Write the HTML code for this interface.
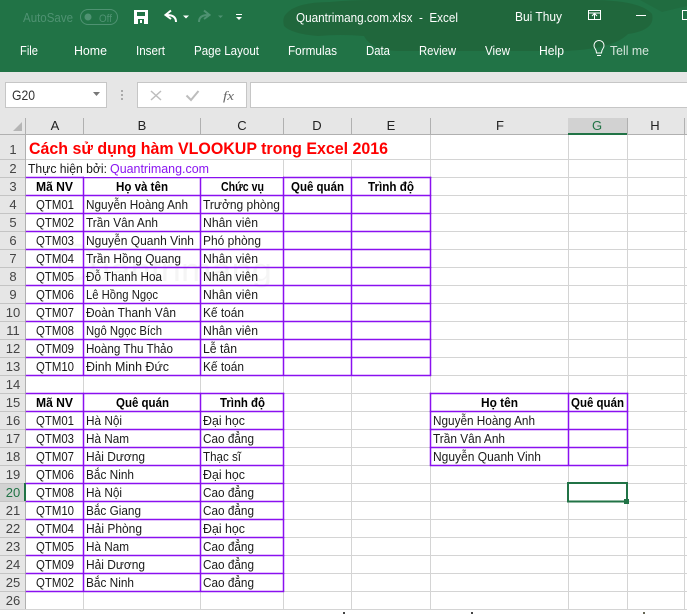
<!DOCTYPE html>
<html><head><meta charset="utf-8"><title>Quantrimang.com.xlsx - Excel</title>
<style>
html,body{margin:0;padding:0;background:#fff;width:687px;height:614px;overflow:hidden}
svg{display:block;position:absolute;left:0;top:0}
text{font-family:"Liberation Sans",sans-serif;font-size:13px;fill:#1a1a1a}
.b{font-weight:bold;fill:#000;font-size:12.5px}
.h{fill:#222;font-size:13px;text-anchor:middle}
.r{fill:#444;font-size:13px;text-anchor:middle}
.w{fill:#fff;font-size:13px}
</style></head><body>
<svg width="687" height="614" viewBox="0 0 687 614" xmlns="http://www.w3.org/2000/svg">
<!-- ribbon -->
<rect x="0" y="0" width="687" height="72" fill="#217346"/>
<path d="M286 14Q296 2 330 2Q350 0 372 0H590Q640 0 652 14Q656 30 628 34Q612 50 560 51H400Q372 51 364 36Q340 34 318 36Q292 34 284 26Q282 18 286 14Z" fill="#20673c"/>
<path d="M640 0H687V6L662 12Z" fill="#206c40"/>
<text x="23" y="22" style="fill:#4f9272" textLength="50" lengthAdjust="spacingAndGlyphs">AutoSave</text>
<rect x="80.500" y="9.500" width="37" height="15" rx="7.500" fill="none" stroke="#4f9272"/>
<circle cx="88" cy="17" r="3.500" fill="#4f9272"/>
<text x="99" y="22" style="fill:#4f9272;font-size:11px" textLength="13" lengthAdjust="spacingAndGlyphs">Off</text>
<path d="M134 10H148V24H134Z" fill="#fff"/><rect x="137" y="12" width="8" height="4" fill="#217346"/><rect x="138" y="19" width="6" height="5" fill="#217346"/><rect x="140" y="20" width="2" height="3" fill="#fff"/>
<path d="M176 22Q176 15 167 15M171 10.500L165.500 15 171 19" fill="none" stroke="#fff" stroke-width="2"/>
<path d="M183 15.500H189L186 18.500Z" fill="#fff"/>
<path d="M199 22Q199 15 208 15M204 10.500L209.500 15 204 19" fill="none" stroke="#4f9272" stroke-width="2"/>
<path d="M218 15.500H223L220.500 18Z" fill="#4f9272"/>
<rect x="236" y="14" width="6" height="1" fill="#fff"/><path d="M236 17H242L239 20Z" fill="#fff"/>
<text x="296" y="22" class="w" textLength="162" lengthAdjust="spacingAndGlyphs" xml:space="preserve">Quantrimang.com.xlsx  -  Excel</text>
<text x="515" y="21" class="w" textLength="47" lengthAdjust="spacingAndGlyphs">Bui Thuy</text>
<rect x="588.500" y="10.500" width="12" height="9" fill="none" stroke="#fff"/><path d="M588 13H601M594.500 19V14M592 16L594.500 13.500 597 16" fill="none" stroke="#fff"/>
<rect x="636" y="15" width="10" height="1" fill="#fff"/>
<rect x="682.500" y="10.500" width="9" height="9" fill="none" stroke="#fff"/>
<text x="20" y="55" class="w" textLength="18" lengthAdjust="spacingAndGlyphs">File</text>
<text x="74" y="55" class="w" textLength="33" lengthAdjust="spacingAndGlyphs">Home</text>
<text x="136" y="55" class="w" textLength="29" lengthAdjust="spacingAndGlyphs">Insert</text>
<text x="194" y="55" class="w" textLength="65" lengthAdjust="spacingAndGlyphs">Page Layout</text>
<text x="288" y="55" class="w" textLength="49" lengthAdjust="spacingAndGlyphs">Formulas</text>
<text x="366" y="55" class="w" textLength="24" lengthAdjust="spacingAndGlyphs">Data</text>
<text x="419" y="55" class="w" textLength="37" lengthAdjust="spacingAndGlyphs">Review</text>
<text x="485" y="55" class="w" textLength="25" lengthAdjust="spacingAndGlyphs">View</text>
<text x="539" y="55" class="w" textLength="25" lengthAdjust="spacingAndGlyphs">Help</text>
<path d="M596.500 53Q596.500 50.500 595 48.500A5 5 0 1 1 603 48.500Q601.500 50.500 601.500 53ZM597 55.500H601" fill="none" stroke="#fff"/>
<text x="610" y="55" class="w" textLength="39" lengthAdjust="spacingAndGlyphs" style="fill:#d5e5dc">Tell me</text>
<!-- formula bar -->
<rect x="0" y="72" width="687" height="46" fill="#e6e6e6"/>
<rect x="5.500" y="82.500" width="101" height="25" fill="#fff" stroke="#c6c6c6"/>
<text x="12" y="100" style="font-size:14px;fill:#333" textLength="23" lengthAdjust="spacingAndGlyphs">G20</text>
<path d="M93 92H100L96.500 96Z" fill="#777"/>
<rect x="121" y="90" width="2" height="2" fill="#aaa"/><rect x="121" y="94" width="2" height="2" fill="#aaa"/><rect x="121" y="98" width="2" height="2" fill="#aaa"/>
<rect x="137.500" y="82.500" width="109" height="25" fill="#fff" stroke="#c6c6c6"/>
<path d="M151 91L161 100M161 91L151 100" stroke="#bdbdbd" stroke-width="1.500" fill="none"/>
<path d="M186.500 95.500L191 100 198.500 91" stroke="#bdbdbd" stroke-width="2" fill="none"/>
<text x="223" y="100" style="font-family:'Liberation Serif',serif;font-style:italic;font-size:13px;fill:#666" textLength="11" lengthAdjust="spacingAndGlyphs">fx</text>
<rect x="250.500" y="82.500" width="440" height="25" fill="#fff" stroke="#c6c6c6"/>
<!-- headers -->
<rect x="0" y="118" width="687" height="16" fill="#e6e6e6"/>
<rect x="0" y="134" width="25" height="475" fill="#e6e6e6"/>
<path d="M13 131H22V122Z" fill="#b5b5b5"/>
<rect x="568" y="118" width="59" height="16" fill="#d2d2d2"/>
<rect x="0" y="483" width="25" height="18" fill="#d2d2d2"/>
<g fill="#b0b0b0">
<rect x="25" y="118" width="1" height="16"/><rect x="83" y="118" width="1" height="16"/><rect x="200" y="118" width="1" height="16"/><rect x="283" y="118" width="1" height="16"/><rect x="351" y="118" width="1" height="16"/><rect x="430" y="118" width="1" height="16"/><rect x="627" y="118" width="1" height="16"/><rect x="684" y="118" width="1" height="16"/>
<rect x="0" y="134" width="687" height="1"/><rect x="25" y="134" width="1" height="475"/>
</g>
<g fill="#c4c4c4">
<rect x="0" y="159" width="25" height="1"/><rect x="0" y="177" width="25" height="1"/><rect x="0" y="195" width="25" height="1"/><rect x="0" y="213" width="25" height="1"/><rect x="0" y="231" width="25" height="1"/><rect x="0" y="249" width="25" height="1"/><rect x="0" y="267" width="25" height="1"/><rect x="0" y="285" width="25" height="1"/><rect x="0" y="303" width="25" height="1"/><rect x="0" y="321" width="25" height="1"/><rect x="0" y="339" width="25" height="1"/><rect x="0" y="357" width="25" height="1"/><rect x="0" y="375" width="25" height="1"/><rect x="0" y="393" width="25" height="1"/><rect x="0" y="411" width="25" height="1"/><rect x="0" y="429" width="25" height="1"/><rect x="0" y="447" width="25" height="1"/><rect x="0" y="465" width="25" height="1"/><rect x="0" y="483" width="25" height="1"/><rect x="0" y="501" width="25" height="1"/><rect x="0" y="519" width="25" height="1"/><rect x="0" y="537" width="25" height="1"/><rect x="0" y="555" width="25" height="1"/><rect x="0" y="573" width="25" height="1"/><rect x="0" y="591" width="25" height="1"/><rect x="0" y="609" width="25" height="1"/>
</g>
<rect x="568" y="133" width="59" height="2" fill="#217346"/>
<rect x="24" y="483" width="2" height="18" fill="#217346"/>
<text x="55" y="130" class="h">A</text><text x="142" y="130" class="h">B</text><text x="242" y="130" class="h">C</text><text x="317" y="130" class="h">D</text><text x="391" y="130" class="h">E</text><text x="500" y="130" class="h">F</text><text x="597" y="130" class="h" style="fill:#217346">G</text><text x="655" y="130" class="h">H</text>
<text x="13" y="154" class="r">1</text><text x="13" y="173" class="r">2</text><text x="13" y="191" class="r">3</text><text x="13" y="209" class="r">4</text><text x="13" y="227" class="r">5</text><text x="13" y="245" class="r">6</text><text x="13" y="263" class="r">7</text><text x="13" y="281" class="r">8</text><text x="13" y="299" class="r">9</text><text x="13" y="317" class="r">10</text><text x="13" y="335" class="r">11</text><text x="13" y="353" class="r">12</text><text x="13" y="371" class="r">13</text><text x="13" y="389" class="r">14</text><text x="13" y="407" class="r">15</text><text x="13" y="425" class="r">16</text><text x="13" y="443" class="r">17</text><text x="13" y="461" class="r">18</text><text x="13" y="479" class="r">19</text><text x="13" y="497" class="r" style="fill:#217346">20</text><text x="13" y="515" class="r">21</text><text x="13" y="533" class="r">22</text><text x="13" y="551" class="r">23</text><text x="13" y="569" class="r">24</text><text x="13" y="587" class="r">25</text><text x="13" y="605" class="r">26</text>
<!-- gridlines -->
<g fill="#d4d4d4">
<rect x="26" y="159" width="661" height="1"/><rect x="26" y="177" width="661" height="1"/><rect x="26" y="195" width="661" height="1"/><rect x="26" y="213" width="661" height="1"/><rect x="26" y="231" width="661" height="1"/><rect x="26" y="249" width="661" height="1"/><rect x="26" y="267" width="661" height="1"/><rect x="26" y="285" width="661" height="1"/><rect x="26" y="303" width="661" height="1"/><rect x="26" y="321" width="661" height="1"/><rect x="26" y="339" width="661" height="1"/><rect x="26" y="357" width="661" height="1"/><rect x="26" y="375" width="661" height="1"/><rect x="26" y="393" width="661" height="1"/><rect x="26" y="411" width="661" height="1"/><rect x="26" y="429" width="661" height="1"/><rect x="26" y="447" width="661" height="1"/><rect x="26" y="465" width="661" height="1"/><rect x="26" y="483" width="661" height="1"/><rect x="26" y="501" width="661" height="1"/><rect x="26" y="519" width="661" height="1"/><rect x="26" y="537" width="661" height="1"/><rect x="26" y="555" width="661" height="1"/><rect x="26" y="573" width="661" height="1"/><rect x="26" y="591" width="661" height="1"/><rect x="0" y="609" width="687" height="1"/>
<rect x="83" y="177" width="1" height="432"/><rect x="200" y="177" width="1" height="432"/><rect x="283" y="160" width="1" height="449"/><rect x="351" y="177" width="1" height="432"/><rect x="430" y="135" width="1" height="474"/><rect x="568" y="135" width="1" height="474"/><rect x="627" y="135" width="1" height="474"/><rect x="684" y="135" width="1" height="474"/>
<rect x="351" y="160" width="1" height="17"/>
</g>
<!-- watermark -->
<text x="90" y="281" style="font-size:32px;fill:#000;opacity:.035" textLength="182" lengthAdjust="spacingAndGlyphs">uantrimang</text>
<circle cx="76" cy="262" r="17" fill="none" stroke="#000" stroke-width="3" opacity=".03"/>
<!-- purple borders -->
<g fill="#8a10f0" stroke="#8a10f0" stroke-width=".5">
<rect x="26" y="177" width="405" height="1"/><rect x="26" y="195" width="405" height="1"/><rect x="26" y="213" width="405" height="1"/><rect x="26" y="231" width="405" height="1"/><rect x="26" y="249" width="405" height="1"/><rect x="26" y="267" width="405" height="1"/><rect x="26" y="285" width="405" height="1"/><rect x="26" y="303" width="405" height="1"/><rect x="26" y="321" width="405" height="1"/><rect x="26" y="339" width="405" height="1"/><rect x="26" y="357" width="405" height="1"/><rect x="26" y="375" width="405" height="1"/>
<rect x="83" y="177" width="1" height="198"/><rect x="200" y="177" width="1" height="198"/><rect x="283" y="177" width="1" height="198"/><rect x="351" y="177" width="1" height="198"/><rect x="430" y="177" width="1" height="198"/>
<rect x="26" y="393" width="258" height="1"/><rect x="26" y="411" width="258" height="1"/><rect x="26" y="429" width="258" height="1"/><rect x="26" y="447" width="258" height="1"/><rect x="26" y="465" width="258" height="1"/><rect x="26" y="483" width="258" height="1"/><rect x="26" y="501" width="258" height="1"/><rect x="26" y="519" width="258" height="1"/><rect x="26" y="537" width="258" height="1"/><rect x="26" y="555" width="258" height="1"/><rect x="26" y="573" width="258" height="1"/><rect x="26" y="591" width="258" height="1"/>
<rect x="83" y="393" width="1" height="198"/><rect x="200" y="393" width="1" height="198"/><rect x="283" y="393" width="1" height="198"/>
<rect x="430" y="393" width="198" height="1"/><rect x="430" y="411" width="198" height="1"/><rect x="430" y="429" width="198" height="1"/><rect x="430" y="447" width="198" height="1"/><rect x="430" y="465" width="198" height="1"/>
<rect x="430" y="393" width="1" height="72"/><rect x="568" y="393" width="1" height="72"/><rect x="627" y="393" width="1" height="72"/>
</g>
<!-- title rows -->
<rect x="26" y="135" width="404" height="24" fill="#fff"/>
<rect x="84" y="160" width="199" height="17" fill="#fff"/>
<text x="29" y="154" style="font-size:17px;font-weight:bold;fill:#f00" textLength="359" lengthAdjust="spacingAndGlyphs">Cách sử dụng hàm VLOOKUP trong Excel 2016</text>
<text x="28" y="173" textLength="79" lengthAdjust="spacingAndGlyphs">Thực hiện bởi:</text>
<text x="110" y="173" style="fill:#8a14f0" textLength="99" lengthAdjust="spacingAndGlyphs">Quantrimang.com</text>
<!-- table 1 -->
<text x="36" y="191" class="b" textLength="37" lengthAdjust="spacingAndGlyphs">Mã NV</text>
<text x="116" y="191" class="b" textLength="52" lengthAdjust="spacingAndGlyphs">Họ và tên</text>
<text x="221" y="191" class="b" textLength="43" lengthAdjust="spacingAndGlyphs">Chức vụ</text>
<text x="291" y="191" class="b" textLength="53" lengthAdjust="spacingAndGlyphs">Quê quán</text>
<text x="368" y="191" class="b" textLength="46" lengthAdjust="spacingAndGlyphs">Trình độ</text>
<text x="36" y="209" textLength="38" lengthAdjust="spacingAndGlyphs">QTM01</text><text x="86" y="209" textLength="102" lengthAdjust="spacingAndGlyphs">Nguyễn Hoàng Anh</text><text x="203" y="209" textLength="77" lengthAdjust="spacingAndGlyphs">Trưởng phòng</text>
<text x="36" y="227" textLength="38" lengthAdjust="spacingAndGlyphs">QTM02</text><text x="86" y="227" textLength="72" lengthAdjust="spacingAndGlyphs">Trần Vân Anh</text><text x="203" y="227" textLength="55" lengthAdjust="spacingAndGlyphs">Nhân viên</text>
<text x="36" y="245" textLength="38" lengthAdjust="spacingAndGlyphs">QTM03</text><text x="86" y="245" textLength="108" lengthAdjust="spacingAndGlyphs">Nguyễn Quanh Vinh</text><text x="203" y="245" textLength="58" lengthAdjust="spacingAndGlyphs">Phó phòng</text>
<text x="36" y="263" textLength="38" lengthAdjust="spacingAndGlyphs">QTM04</text><text x="86" y="263" textLength="95" lengthAdjust="spacingAndGlyphs">Trần Hồng Quang</text><text x="203" y="263" textLength="55" lengthAdjust="spacingAndGlyphs">Nhân viên</text>
<text x="36" y="281" textLength="38" lengthAdjust="spacingAndGlyphs">QTM05</text><text x="86" y="281" textLength="76" lengthAdjust="spacingAndGlyphs">Đỗ Thanh Hoa</text><text x="203" y="281" textLength="55" lengthAdjust="spacingAndGlyphs">Nhân viên</text>
<text x="36" y="299" textLength="38" lengthAdjust="spacingAndGlyphs">QTM06</text><text x="86" y="299" textLength="72" lengthAdjust="spacingAndGlyphs">Lê Hồng Ngọc</text><text x="203" y="299" textLength="55" lengthAdjust="spacingAndGlyphs">Nhân viên</text>
<text x="36" y="317" textLength="38" lengthAdjust="spacingAndGlyphs">QTM07</text><text x="86" y="317" textLength="90" lengthAdjust="spacingAndGlyphs">Đoàn Thanh Vân</text><text x="203" y="317" textLength="41" lengthAdjust="spacingAndGlyphs">Kế toán</text>
<text x="36" y="335" textLength="38" lengthAdjust="spacingAndGlyphs">QTM08</text><text x="86" y="335" textLength="76" lengthAdjust="spacingAndGlyphs">Ngô Ngọc Bích</text><text x="203" y="335" textLength="55" lengthAdjust="spacingAndGlyphs">Nhân viên</text>
<text x="36" y="353" textLength="38" lengthAdjust="spacingAndGlyphs">QTM09</text><text x="86" y="353" textLength="87" lengthAdjust="spacingAndGlyphs">Hoàng Thu Thảo</text><text x="203" y="353" textLength="34" lengthAdjust="spacingAndGlyphs">Lễ tân</text>
<text x="36" y="371" textLength="38" lengthAdjust="spacingAndGlyphs">QTM10</text><text x="86" y="371" textLength="83" lengthAdjust="spacingAndGlyphs">Đinh Minh Đức</text><text x="203" y="371" textLength="41" lengthAdjust="spacingAndGlyphs">Kế toán</text>
<!-- table 2 -->
<text x="36" y="407" class="b" textLength="37" lengthAdjust="spacingAndGlyphs">Mã NV</text>
<text x="116" y="407" class="b" textLength="53" lengthAdjust="spacingAndGlyphs">Quê quán</text>
<text x="220" y="407" class="b" textLength="45" lengthAdjust="spacingAndGlyphs">Trình độ</text>
<text x="36" y="425" textLength="38" lengthAdjust="spacingAndGlyphs">QTM01</text><text x="86" y="425" textLength="36" lengthAdjust="spacingAndGlyphs">Hà Nội</text><text x="203" y="425" textLength="42" lengthAdjust="spacingAndGlyphs">Đại học</text>
<text x="36" y="443" textLength="38" lengthAdjust="spacingAndGlyphs">QTM03</text><text x="86" y="443" textLength="43" lengthAdjust="spacingAndGlyphs">Hà Nam</text><text x="203" y="443" textLength="51" lengthAdjust="spacingAndGlyphs">Cao đẳng</text>
<text x="36" y="461" textLength="38" lengthAdjust="spacingAndGlyphs">QTM07</text><text x="86" y="461" textLength="59" lengthAdjust="spacingAndGlyphs">Hải Dương</text><text x="203" y="461" textLength="38" lengthAdjust="spacingAndGlyphs">Thạc sĩ</text>
<text x="36" y="479" textLength="38" lengthAdjust="spacingAndGlyphs">QTM06</text><text x="86" y="479" textLength="48" lengthAdjust="spacingAndGlyphs">Bắc Ninh</text><text x="203" y="479" textLength="42" lengthAdjust="spacingAndGlyphs">Đại học</text>
<text x="36" y="497" textLength="38" lengthAdjust="spacingAndGlyphs">QTM08</text><text x="86" y="497" textLength="36" lengthAdjust="spacingAndGlyphs">Hà Nội</text><text x="203" y="497" textLength="51" lengthAdjust="spacingAndGlyphs">Cao đẳng</text>
<text x="36" y="515" textLength="38" lengthAdjust="spacingAndGlyphs">QTM10</text><text x="86" y="515" textLength="55" lengthAdjust="spacingAndGlyphs">Bắc Giang</text><text x="203" y="515" textLength="51" lengthAdjust="spacingAndGlyphs">Cao đẳng</text>
<text x="36" y="533" textLength="38" lengthAdjust="spacingAndGlyphs">QTM04</text><text x="86" y="533" textLength="56" lengthAdjust="spacingAndGlyphs">Hải Phòng</text><text x="203" y="533" textLength="42" lengthAdjust="spacingAndGlyphs">Đại học</text>
<text x="36" y="551" textLength="38" lengthAdjust="spacingAndGlyphs">QTM05</text><text x="86" y="551" textLength="43" lengthAdjust="spacingAndGlyphs">Hà Nam</text><text x="203" y="551" textLength="51" lengthAdjust="spacingAndGlyphs">Cao đẳng</text>
<text x="36" y="569" textLength="38" lengthAdjust="spacingAndGlyphs">QTM09</text><text x="86" y="569" textLength="59" lengthAdjust="spacingAndGlyphs">Hải Dương</text><text x="203" y="569" textLength="51" lengthAdjust="spacingAndGlyphs">Cao đẳng</text>
<text x="36" y="587" textLength="38" lengthAdjust="spacingAndGlyphs">QTM02</text><text x="86" y="587" textLength="48" lengthAdjust="spacingAndGlyphs">Bắc Ninh</text><text x="203" y="587" textLength="51" lengthAdjust="spacingAndGlyphs">Cao đẳng</text>
<!-- table 3 -->
<text x="481" y="407" class="b" textLength="37" lengthAdjust="spacingAndGlyphs">Họ tên</text>
<text x="571" y="407" class="b" textLength="53" lengthAdjust="spacingAndGlyphs">Quê quán</text>
<text x="433" y="425" textLength="102" lengthAdjust="spacingAndGlyphs">Nguyễn Hoàng Anh</text>
<text x="433" y="443" textLength="72" lengthAdjust="spacingAndGlyphs">Trần Vân Anh</text>
<text x="433" y="461" textLength="108" lengthAdjust="spacingAndGlyphs">Nguyễn Quanh Vinh</text>
<!-- selection -->
<rect x="568" y="483" width="59" height="18.500" fill="none" stroke="#217346" stroke-width="2"/>
<rect x="624" y="499" width="5" height="5" fill="#217346"/>
<!-- bottom ticks -->
<rect x="343" y="612" width="2" height="2" fill="#444"/><rect x="471" y="612" width="2" height="2" fill="#444"/><rect x="643" y="612" width="2" height="2" fill="#665"/>
</svg>
</body></html>
